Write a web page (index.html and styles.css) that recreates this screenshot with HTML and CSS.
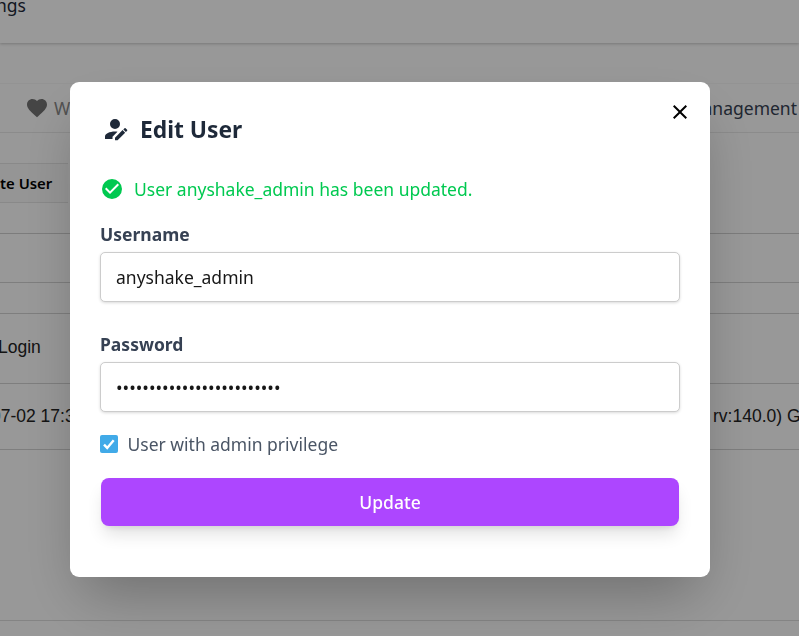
FILE: index.html
```html
<!DOCTYPE html>
<html lang="en">
<head>
<meta charset="utf-8">
<title>Edit User</title>
<link rel="stylesheet" href="styles.css">
</head>
<body>
<div class="page">
  <header class="topbar"><span>ngs</span></header>
  <main class="panel">
    <nav class="tabs">
      <span class="tab muted"><svg viewBox="0 0 24 24" width="24" height="24"><path d="M12,21.35L10.55,20.03C5.4,15.36 2,12.27 2,8.5C2,5.41 4.42,3 7.5,3C9.24,3 10.91,3.81 12,5.08C13.09,3.81 14.76,3 16.5,3C19.58,3 22,5.41 22,8.5C22,12.27 18.6,15.36 13.45,20.03L12,21.35Z"/></svg>W</span>
      <span class="tab">anagement</span>
    </nav>
    <div class="actions"><button class="create">te User</button></div>
    <section class="table">
      <div class="row search"></div>
      <div class="row spacer"></div>
      <div class="row head"><span>Login</span></div>
      <div class="row data"><span>07-02 17:3</span><span class="agent">rv:140.0) G</span></div>
    </section>
  </main>
</div>
<div class="backdrop">
  <form class="modal">
    <button type="button" class="close" aria-label="Close"><svg viewBox="0 0 24 24" width="24" height="24"><path d="M19,6.41L17.59,5L12,10.59L6.41,5L5,6.41L10.59,12L5,17.59L6.41,19L12,13.41L17.59,19L19,17.59L13.41,12L19,6.41Z"/></svg></button>
    <h2 class="title"><svg viewBox="0 0 24 24" width="30" height="30"><path d="M21.7,13.35L20.7,14.35L18.65,12.3L19.65,11.3C19.86,11.09 20.21,11.09 20.42,11.3L21.7,12.58C21.91,12.79 21.91,13.14 21.7,13.35M12,18.94L18.06,12.88L20.11,14.93L14.06,21H12V18.94M12,14C7.58,14 4,15.79 4,18V20H10V18.11L14,14.11C13.34,14.03 12.67,14 12,14M12,4A4,4 0 0,0 8,8A4,4 0 0,0 12,12A4,4 0 0,0 16,8A4,4 0 0,0 12,4Z"/></svg><span>Edit User</span></h2>
    <p class="success"><svg viewBox="0 0 24 24" width="24" height="24"><path d="M12,2A10,10 0 1,0 22,12A10,10 0 0,0 12,2M10,17L5,12L6.41,10.59L10,14.17L17.59,6.58L19,8L10,17Z"/></svg>User anyshake_admin has been updated.</p>
    <label class="label" for="username">Username</label>
    <input class="field" id="username" type="text" value="anyshake_admin">
    <label class="label second" for="password">Password</label>
    <input class="field" id="password" type="password" value="1234567890123456789012345">
    <div class="check"><span class="box"><svg viewBox="0 0 18 18" width="18" height="18"><path d="M4 9.6L7.2 12.9L13.7 5.2"/></svg></span>User with admin privilege</div>
    <button type="button" class="update">Update</button>
  </form>
</div>
</body>
</html>
```
FILE: styles.css
```css
* { box-sizing: border-box; }
body {
  margin: 0;
  height: 636px;
  overflow: hidden;
  font-family: "Noto Sans", sans-serif;
  font-size: 17.5px;
  color: #1e2939;
}
svg { display: block; fill: currentColor; flex: none; }
button { font-family: inherit; border: 0; padding: 0; }
.page { height: 636px; background: #fdfdfd; }
.topbar {
  height: 43px;
  background: #fff;
  box-shadow: 0 1px 3px rgba(0,0,0,.15), 0 1px 2px rgba(0,0,0,.08);
  line-height: 26px;
}
.topbar span { display: block; margin-left: -4px; transform: translateY(-8px); }
.panel {
  margin-top: 40px;
  height: 538px;
  border-top: 1px solid #f6f6f6;
  border-bottom: 1px solid #dcdcdc;
}
.tabs {
  display: flex;
  justify-content: space-between;
  align-items: center;
  height: 49px;
  padding: 0 2px 1px 25px;
  border-bottom: 1px solid #e8e8e8;
}
.tab { display: flex; align-items: center; gap: 5px; color: #364153; }
.muted { color: #888; }
.muted svg { fill: #737373; }
.actions { padding-top: 30px; height: 101px; border-bottom: 1px solid #cfcfcf; }
.create {
  display: block;
  width: 68px;
  height: 40px;
  border: 1px solid #e4e4e4;
  border-left: 0;
  border-right: 0;
  background: #f9f9f9;
  color: #000;
  font-size: 14.9px;
  font-weight: 600;
  text-align: left;
}
.table { font-family: "Liberation Sans", sans-serif; color: #222; }
.row { display: flex; align-items: center; border-bottom: 1px solid #d2d2d2; white-space: nowrap; }
.search { height: 49px; }
.spacer { height: 31px; }
.head { height: 70px; padding-bottom: 2px; }
.head span { margin-left: -2px; }
.data { height: 66px; }
.data span { margin-left: -9px; }
.data .agent { width: 86px; margin: 0 0 0 auto; }
.backdrop {
  position: fixed;
  inset: 0;
  background: rgba(0,0,0,.4);
}
.modal {
  position: absolute;
  left: 70px;
  top: 82px;
  width: 640px;
  height: 495px;
  padding: 31px 30px 0;
  background: #fff;
  border-radius: 9px;
  box-shadow: 0 27px 55px -12px rgba(0,0,0,.28);
}
.close {
  position: absolute;
  top: 18px;
  right: 18px;
  background: none;
  color: #000;
}
.title {
  display: flex;
  align-items: center;
  gap: 10px;
  height: 31px;
  margin: 0;
  font-size: 22.8px;
  font-weight: 700;
}
.title span { padding-top: 2px; }
.success {
  display: flex;
  align-items: center;
  gap: 10px;
  height: 24px;
  margin: 33px 0 0;
  color: #00c950;
}
.label {
  display: block;
  margin-top: 20px;
  height: 26px;
  line-height: 26px;
  color: #364153;
  font-weight: 700;
}
.second { margin-top: 29px; }
.field {
  display: block;
  width: 580px;
  height: 50px;
  margin-top: 5px;
  padding: 0 15px;
  border: 1px solid #ccc;
  border-radius: 5px;
  background: #fff;
  box-shadow: 0 1px 3px rgba(0,0,0,.15);
  font: inherit;
  color: #171717;
}
.check { display: flex; align-items: center; gap: 9.5px; height: 26px; margin-top: 19px; color: #4a5565; }
.box { width: 18px; height: 18px; border-radius: 2px; background: #41aae8; }
.box svg { fill: none; stroke: #fff; stroke-width: 2.4; }
.update {
  display: block;
  width: 578px;
  height: 47.5px;
  margin: 21px 0 0 1px;
  border-radius: 8px;
  background: #ad46ff;
  color: #fff;
  font-size: 17.5px;
  font-weight: 500;
  box-shadow: 0 11px 17px -3px rgba(0,0,0,.12), 0 4px 7px -4px rgba(0,0,0,.12);
}
```
